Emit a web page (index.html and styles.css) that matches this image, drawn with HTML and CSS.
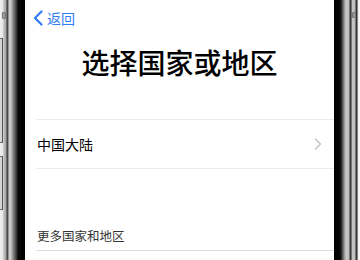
FILE: index.html
```html
<!DOCTYPE html>
<html lang="zh-CN">
<head>
<meta charset="utf-8">
<link rel="stylesheet" href="styles.css">
</head>
<body>
<div class="phone">
  <div class="bezel bezel-left">
    <span class="btn btn-l1"></span>
    <span class="btn btn-l2"></span>
    <span class="btn btn-l3"></span>
  </div>
  <div class="screen">
    <div class="nav">
      <svg class="back-icon" width="12" height="16" viewBox="0 0 12 16"><path d="M9.5 1.5 L3 8 L9.5 14.5" fill="none" stroke="#2f7cf6" stroke-width="2.2" stroke-linecap="round" stroke-linejoin="round"/></svg>
      <span class="back-text">返回</span>
    </div>
    <h1 class="title">选择国家或地区</h1>
    <div class="list">
      <div class="row">
        <span class="row-text">中国大陆</span>
        <svg class="chev" width="8" height="12" viewBox="0 0 8 12"><path d="M1.5 1 L6.5 6 L1.5 11" fill="none" stroke="#c4c4c8" stroke-width="1.5" stroke-linecap="round" stroke-linejoin="round"/></svg>
      </div>
    </div>
    <div class="section">更多国家和地区</div>
  </div>
  <div class="bezel bezel-right">
    <span class="btn btn-r1"></span>
  </div>
</div>
</body>
</html>
```
FILE: styles.css
```css
html, body {
  margin: 0;
  padding: 0;
  background: #fff;
}
body {
  width: 360px;
  height: 260px;
  overflow: hidden;
  font-family: "Noto Sans CJK SC", "Noto Sans", sans-serif;
}
.phone {
  display: flex;
  height: 260px;
}
.bezel {
  position: relative;
  flex: none;
  height: 100%;
}
.bezel-left {
  width: 25px;
  background: linear-gradient(to right,
    #f0f0f0 0px, #e4e4e4 3px, #b8b8b8 4px, #a8a8a8 6px,
    #3a3a3a 7px, #5a5a5a 8px, #d0d0d0 9px, #c4c4c4 11px,
    #8a8a8a 13px, #5c5c5c 15px, #2a2a2a 17px, #0a0a0a 18px, #000 25px);
}
.bezel-right {
  width: 26px;
  background: linear-gradient(to right,
    #000 0px, #050505 6px, #3a3a3a 8px, #8c8c8c 10px,
    #c8c8c8 12px, #bdbdbd 15px, #404040 16px, #2a2a2a 17px,
    #c6c6c6 18px, #bcbcbc 21px, #3a3a3a 22px, #2a2a2a 23px,
    #e8e8e8 24px, #ffffff 26px);
}
.btn {
  position: absolute;
  background: #c8c8c8;
  border: 1px solid #555;
  border-radius: 1px;
}
.btn-l1 {
  left: 2px;
  top: 12px;
  width: 2px;
  height: 5px;
  background: #9a9a9a;
  border-color: #777;
}
.btn-l2 {
  left: 0px;
  top: 38px;
  width: 2px;
  height: 103px;
  background: #d6d6d6;
  border-left: none;
}
.btn-l3 {
  left: 0px;
  top: 156px;
  width: 2px;
  height: 52px;
  background: #d6d6d6;
  border-left: none;
}
.btn-r1 {
  left: 18px;
  top: 12px;
  width: 2px;
  height: 4px;
  background: #9a9a9a;
  border-color: #777;
}
.screen {
  flex: 1;
  min-width: 0;
  background: #fff;
  display: flex;
  flex-direction: column;
}
.nav {
  height: 36px;
  display: flex;
  align-items: center;
  padding-left: 7px;
  gap: 3px;
}
.back-icon {
  display: block;
}
.back-text {
  font-size: 14px;
  line-height: 20px;
  color: #2f7cf6;
}
.title {
  margin: 8px 0 0;
  font-size: 28px;
  line-height: 36px;
  font-weight: 500;
  color: #000;
  text-align: center;
  letter-spacing: 0;
}
.list {
  margin: 39px 0 0 11px;
  border-top: 1px solid #ebebeb;
  border-bottom: 1px solid #ebebeb;
}
.row {
  height: 48px;
  display: flex;
  align-items: center;
  justify-content: space-between;
  padding: 0 12px 0 1px;
}
.row-text {
  font-size: 14px;
  line-height: 20px;
  color: #000;
}
.chev {
  display: block;
}
.section {
  margin: 57px 0 0 11px;
  padding: 0 0 4px 1px;
  font-size: 12.5px;
  line-height: 20px;
  color: #333;
  border-bottom: 1px solid #dedede;
}
```
